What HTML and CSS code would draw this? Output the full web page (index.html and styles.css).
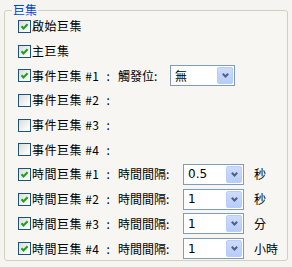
FILE: index.html
```html
<!DOCTYPE html>
<html lang="zh-Hant">
<head>
  <meta charset="UTF-8" />
  <title>巨集</title>
  <link rel="stylesheet" href="styles.css">
</head>
<body>
  <fieldset class="group">
    <legend>巨集</legend>

    <div class="rows">
      <div class="row">
        <span class="box on"><svg viewBox="0 0 11 11"><path d="M2.5 5.2 L4.5 7.4 L8.6 3.2"/></svg></span>
        <span class="name">啟始巨集</span>
      </div>

      <div class="row">
        <span class="box on"><svg viewBox="0 0 11 11"><path d="M2.5 5.2 L4.5 7.4 L8.6 3.2"/></svg></span>
        <span class="name">主巨集</span>
      </div>

      <div class="row">
        <span class="box on"><svg viewBox="0 0 11 11"><path d="M2.5 5.2 L4.5 7.4 L8.6 3.2"/></svg></span>
        <span class="name">事件巨集 #1<span class="colon">:</span></span>
        <span class="field trig">觸發位:</span>
        <div class="combo wide"><span class="val cjk">無</span><span class="drop"><svg viewBox="0 0 7 5"><path d="M0.8 0.8 L3.5 3.5 L6.2 0.8"/></svg></span></div>
      </div>

      <div class="row">
        <span class="box"></span>
        <span class="name">事件巨集 #2<span class="colon">:</span></span>
      </div>

      <div class="row">
        <span class="box"></span>
        <span class="name">事件巨集 #3<span class="colon">:</span></span>
      </div>

      <div class="row">
        <span class="box"></span>
        <span class="name">事件巨集 #4<span class="colon">:</span></span>
      </div>

      <div class="row">
        <span class="box on"><svg viewBox="0 0 11 11"><path d="M2.5 5.2 L4.5 7.4 L8.6 3.2"/></svg></span>
        <span class="name">時間巨集 #1<span class="colon">:</span></span>
        <span class="field">時間間隔:</span>
        <div class="combo"><span class="val">0.5</span><span class="drop"><svg viewBox="0 0 7 5"><path d="M0.8 0.8 L3.5 3.5 L6.2 0.8"/></svg></span></div>
        <span class="unit">秒</span>
      </div>

      <div class="row">
        <span class="box on"><svg viewBox="0 0 11 11"><path d="M2.5 5.2 L4.5 7.4 L8.6 3.2"/></svg></span>
        <span class="name">時間巨集 #2<span class="colon">:</span></span>
        <span class="field">時間間隔:</span>
        <div class="combo"><span class="val">1</span><span class="drop"><svg viewBox="0 0 7 5"><path d="M0.8 0.8 L3.5 3.5 L6.2 0.8"/></svg></span></div>
        <span class="unit">秒</span>
      </div>

      <div class="row">
        <span class="box on"><svg viewBox="0 0 11 11"><path d="M2.5 5.2 L4.5 7.4 L8.6 3.2"/></svg></span>
        <span class="name">時間巨集 #3<span class="colon">:</span></span>
        <span class="field">時間間隔:</span>
        <div class="combo"><span class="val">1</span><span class="drop"><svg viewBox="0 0 7 5"><path d="M0.8 0.8 L3.5 3.5 L6.2 0.8"/></svg></span></div>
        <span class="unit">分</span>
      </div>

      <div class="row">
        <span class="box on"><svg viewBox="0 0 11 11"><path d="M2.5 5.2 L4.5 7.4 L8.6 3.2"/></svg></span>
        <span class="name">時間巨集 #4<span class="colon">:</span></span>
        <span class="field">時間間隔:</span>
        <div class="combo"><span class="val">1</span><span class="drop"><svg viewBox="0 0 7 5"><path d="M0.8 0.8 L3.5 3.5 L6.2 0.8"/></svg></span></div>
        <span class="unit">小時</span>
      </div>
    </div>
  </fieldset>
</body>
</html>
```

FILE: styles.css
```css
/* Basic Reset */
* {
  margin: 0;
  padding: 0;
  box-sizing: border-box;
}

body {
  background: #f5f4f0;
  color: #000;
  font-family: "Noto Sans CJK TC", sans-serif;
  font-size: 12px;
  line-height: 14px;
}

/* XP style group box */
.group {
  margin: 5px 4px 0;
  height: 256px;
  border: 1px solid #d0d0bf;
  border-radius: 3px;
  padding: 0 0 0 7px;
  background: #f7f6f3;
}

.group legend {
  padding: 0 1px;
  color: #0046d5;
  font-size: 12px;
  line-height: 10px;
}

.rows {
  margin-top: -1px;
  margin-left: 6px;
}

.row {
  display: flex;
  align-items: center;
  height: 24.7px;
}

/* Checkbox */
.box {
  width: 13px;
  height: 13px;
  border: 1px solid #1c5180;
  background: linear-gradient(135deg, #dcdcd7 0%, #fbfbf9 80%, #fff 100%);
  flex-shrink: 0;
}

.box svg {
  display: block;
  width: 11px;
  height: 11px;
}

.box path {
  fill: none;
  stroke: #21a121;
  stroke-width: 2.2;
}

.name {
  width: 86px;
  margin-left: 1px;
  letter-spacing: 0.5px;
  white-space: pre;
}

.colon {
  margin-left: 7px;
}

.field {
  width: 65px;
}

.field.trig {
  width: 52px;
}

/* Combo box */
.combo {
  display: flex;
  align-items: center;
  justify-content: space-between;
  width: 61px;
  height: 21px;
  border: 1px solid #7f9db9;
  background: #fff;
  padding: 1px;
}

.combo.wide {
  width: 65px;
}

.val {
  padding-left: 3px;
  font-family: "DejaVu Sans", sans-serif;
  font-size: 12px;
}

.val.cjk {
  font-family: "Noto Sans CJK TC", sans-serif;
}

.drop {
  width: 16px;
  height: 17px;
  border-radius: 2px;
  background: linear-gradient(180deg, #cddcfd 0%, #b8ccf9 100%);
  border: 1px solid #b9cdfa;
  display: flex;
  align-items: center;
  justify-content: center;
}

.drop svg {
  width: 7px;
  height: 5px;
}

.drop path {
  fill: none;
  stroke: #4d6185;
  stroke-width: 2;
}

.unit {
  margin-left: 10px;
}
```
